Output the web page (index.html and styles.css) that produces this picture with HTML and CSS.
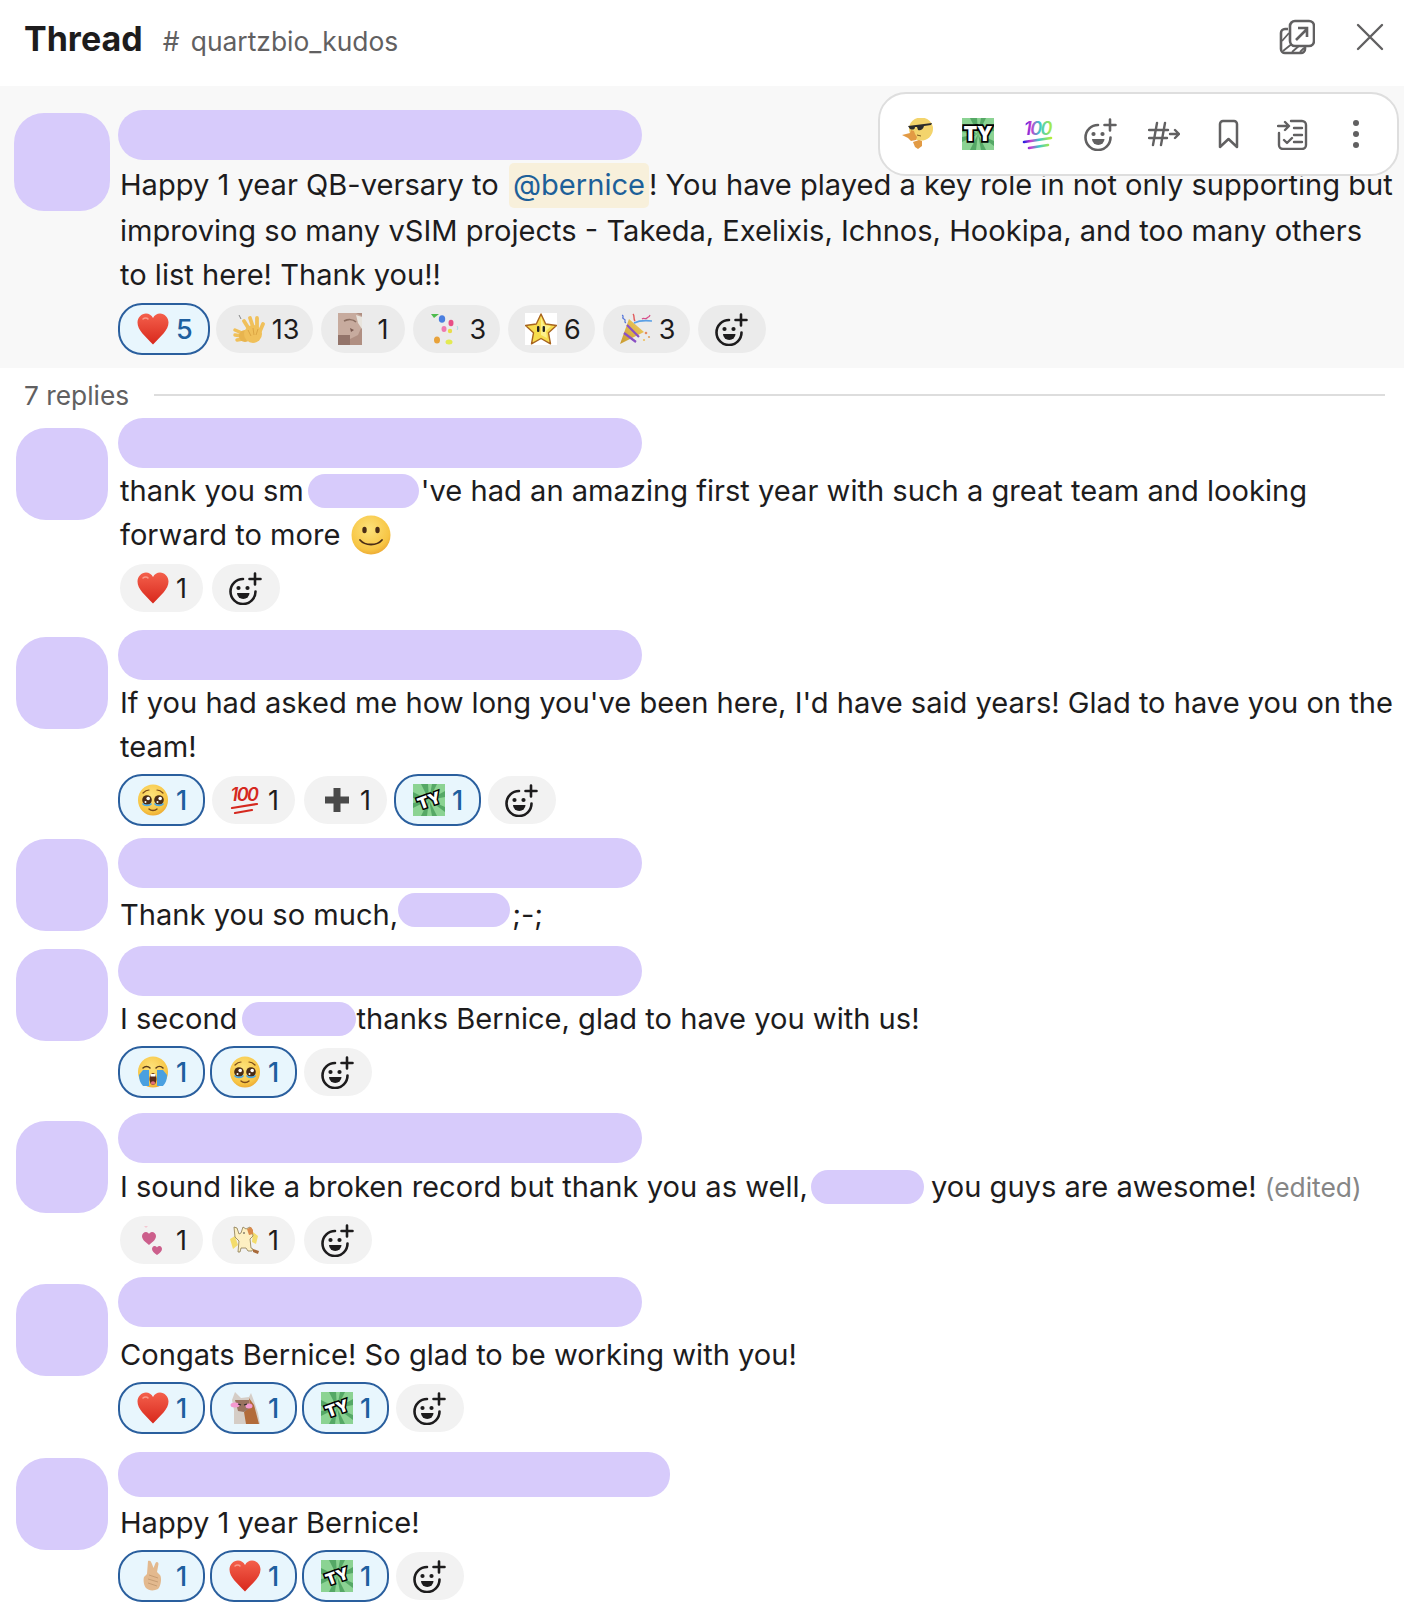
FILE: index.html
```html
<!DOCTYPE html>
<html lang="en">
<head>
    <meta charset="UTF-8">
    <title>Thread</title>
    <link rel="stylesheet" href="styles.css">
</head>
<body>
    <svg class="sprites" aria-hidden="true">
        <defs>
            <linearGradient id="heartFill" x1="0" y1="0" x2="0" y2="1">
                <stop offset="0" stop-color="#f4604c"/><stop offset="1" stop-color="#d8281c"/>
            </linearGradient>
            <radialGradient id="faceFill" cx="0.45" cy="0.35" r="0.75">
                <stop offset="0" stop-color="#fde27a"/><stop offset="0.7" stop-color="#f7c544"/><stop offset="1" stop-color="#e79a2a"/>
            </radialGradient>
            <linearGradient id="rainbow" x1="0" y1="0" x2="1" y2="0">
                <stop offset="0" stop-color="#2a1fe0"/><stop offset="0.25" stop-color="#c93bd0"/><stop offset="0.55" stop-color="#3bc9c9"/><stop offset="1" stop-color="#b4ee3a"/>
            </linearGradient>
            <linearGradient id="cone" x1="0" y1="1" x2="1" y2="0">
                <stop offset="0" stop-color="#c99a2e"/><stop offset="1" stop-color="#f2cf63"/>
            </linearGradient>
        </defs>
        <symbol id="i-add" viewBox="0 0 33 33">
            <path d="M14 7A12.5 12.5 0 1 0 26.5 19.5" fill="none" stroke="currentColor" stroke-width="2.6" stroke-linecap="round"/>
            <path d="M26 1.5v11M20.5 7h11" fill="none" stroke="currentColor" stroke-width="2.6" stroke-linecap="round"/>
            <circle cx="9.5" cy="16" r="2.1" fill="currentColor"/>
            <circle cx="18.5" cy="16" r="2.1" fill="currentColor"/>
            <path d="M8 21h12.500a6.250 6 0 0 1-12.500 0z" fill="currentColor"/>
        </symbol>
        <symbol id="i-heart" viewBox="0 0 32 32">
            <path d="M16 31.500C8 23 .5 17 .5 9.500 .5 4.500 4.500 .5 9 .5c3 0 5.500 1.500 7 4.500C17.500 2 20 .5 23 .5c4.500 0 8.500 4 8.500 9C31.500 17 24 23 16 31.500z" fill="url(#heartFill)"/>
            <path d="M6 6c1.500-1.500 4-1.500 5 0" fill="none" stroke="#fa9a8a" stroke-width="1.500" stroke-linecap="round"/>
        </symbol>
        <symbol id="i-clap" viewBox="0 0 32 32">
            <g fill="none" stroke="#f0c05a" stroke-linecap="round">
                <path d="M9 20L2 17M9 23L2 22M10 26l-6 1" stroke-width="3.400"/>
                <path d="M16 16L11 8M20 14L17 5M24 14l0-9M27 18l3-7" stroke-width="3.800"/>
            </g>
            <ellipse cx="12" cy="23" rx="6" ry="6" fill="#e8b44e"/>
            <ellipse cx="20" cy="21" rx="9" ry="9" fill="#f0c05a"/>
            <path d="M15 17l3 6M20 15l1 7M25 16l-2 6" fill="none" stroke="#d9a23f" stroke-width="0.900"/>
            <path d="M6 2l2 4" stroke="#6a6a6a" stroke-width="0.800"/>
        </symbol>
        <symbol id="i-catface" viewBox="0 0 32 32">
            <rect x="0" y="0" width="24" height="32" fill="#b08f82"/>
            <path d="M0 0h18l6 3v10l-4 9-8 4-4 6H0z" fill="#c7ab9e"/>
            <path d="M24 4l-6-2 2 8 4 6z" fill="#e8e4dd"/>
            <path d="M6 8c4-2 9-2 12 1" fill="none" stroke="#8a6d60" stroke-width="1.500"/>
            <path d="M0 22h12v10H0z" fill="#93746a"/>
            <path d="M12 15l4 2-3 2z" fill="#7a5a50"/>
        </symbol>
        <symbol id="i-balloons" viewBox="0 0 32 32">
            <path d="M1 1l8 0-5 4z" fill="#4dbb4d"/>
            <ellipse cx="12" cy="6" rx="3.200" ry="3.800" fill="#4a7fe0"/>
            <ellipse cx="21" cy="10" rx="2.500" ry="3.200" fill="#e84f86"/>
            <ellipse cx="14" cy="16" rx="2.500" ry="3" fill="#f07ab0"/>
            <ellipse cx="20" cy="18" rx="2.200" ry="2.200" fill="#e9dc4a"/>
            <ellipse cx="7" cy="27" rx="3" ry="3.500" fill="#e8a23a"/>
            <ellipse cx="19" cy="29" rx="3.500" ry="2.500" fill="#e3ea52"/>
            <path d="M27 13c1 1 1 3 0 4" fill="none" stroke="#a8dfe8" stroke-width="1"/>
        </symbol>
        <symbol id="i-star" viewBox="0 0 32 32">
            <rect width="32" height="32" fill="#fff"/>
            <path d="M16 1l4.700 10 10.800 1.500-8 7.300 2 11-9.500-5.300-9.500 5.300 2-11-8-7.300L11.300 11z" fill="#f7dc4d" stroke="#a8641e" stroke-width="1.400" stroke-linejoin="round"/>
            <path d="M16 4l3 8 7 1-5 5 1 7-6-3z" fill="#fdf08a"/>
            <rect x="12" y="13" width="2.400" height="6" rx="1.100" fill="#222"/>
            <rect x="17.600" y="13" width="2.400" height="6" rx="1.100" fill="#222"/>
        </symbol>
        <symbol id="i-popper" viewBox="0 0 32 32">
            <path d="M0 31L9 6l15 13z" fill="url(#cone)"/>
            <path d="M4 20l12 9M7 12l12 12" stroke="#8a4fc4" stroke-width="2.200" fill="none"/>
            <path d="M14 10c4-2 10-3 18-2" fill="none" stroke="#5aa0e6" stroke-width="1.600"/>
            <path d="M2 2c3 1-1 3 2 4s-1 3 2 4" fill="none" stroke="#4d6fd8" stroke-width="1.200"/>
            <path d="M13 1c2 2 0 4 2 7" fill="none" stroke="#e0585a" stroke-width="1.400"/>
            <path d="M22 6c2-2 3 1 5-1s2 0 3-3" fill="none" stroke="#d84f8a" stroke-width="1.200"/>
            <circle cx="26" cy="20" r="1.300" fill="#e88a60"/>
            <circle cx="29" cy="24" r="1.100" fill="#e0a060"/>
            <circle cx="24" cy="27" r="1.100" fill="#eec060"/>
        </symbol>
        <symbol id="i-ty-bg" viewBox="0 0 32 32">
            <rect width="32" height="32" fill="#8bd393"/>
            <path d="M16 16L8 0h7zM16 16L24 0h-5zM16 16l16-9v6zM16 16l16 7v5zM16 16l-8 16h6zM16 16l8 16h-5zM16 16L0 8v6zM16 16L0 24v-5z" fill="#55a866"/>
        </symbol>
        <symbol id="i-plus" viewBox="0 0 32 32">
            <path d="M12.500 4h7v8.500H28v7h-8.500V28h-7v-8.500H4v-7h8.500z" fill="#4a4a4a"/>
        </symbol>
        <symbol id="i-plead" viewBox="0 0 32 32">
            <ellipse cx="16" cy="16" rx="15" ry="15.500" fill="url(#faceFill)"/>
            <circle cx="10" cy="16" r="4.800" fill="#4a2c16"/>
            <circle cx="22" cy="16" r="4.800" fill="#4a2c16"/>
            <circle cx="11.200" cy="14.500" r="1.800" fill="#fff"/>
            <circle cx="23.200" cy="14.500" r="1.800" fill="#fff"/>
            <circle cx="8.500" cy="18" r="1" fill="#fff"/>
            <circle cx="20.500" cy="18" r="1" fill="#fff"/>
            <path d="M5.500 19.500c2 2.500 7 2.500 9 0M17.500 19.500c2 2.500 7 2.500 9 0" fill="none" stroke="#4aa8e8" stroke-width="1.600"/>
            <path d="M12 25c2 2 6 2 8 0" fill="none" stroke="#7a4a1a" stroke-width="1.400" stroke-linecap="round"/>
            <path d="M6 9c2-2 4-3 6-3M26 9c-2-2-4-3-6-3" fill="none" stroke="#7a4a1a" stroke-width="1.200" stroke-linecap="round"/>
        </symbol>
        <symbol id="i-sob" viewBox="0 0 32 32">
            <ellipse cx="16" cy="16" rx="15" ry="15.500" fill="url(#faceFill)"/>
            <path d="M6 14h6v16H6c-3-3-4-7-4-11zM20 14h6l4 5c0 4-1 8-4 11h-6z" fill="#4aa0e0"/>
            <path d="M6 12c2-2 5-2 7 0M19 12c2-2 5-2 7 0" fill="none" stroke="#5a3a1a" stroke-width="1.500" stroke-linecap="round"/>
            <ellipse cx="16" cy="23" rx="3.500" ry="6" fill="#5a2a1a"/>
            <rect x="13.500" y="18" width="5" height="2.500" fill="#fff"/>
            <ellipse cx="16" cy="27" rx="2.200" ry="1.800" fill="#e2707a"/>
        </symbol>
        <symbol id="i-hearts" viewBox="0 0 32 32">
            <path d="M7 2h4l-2 2z" fill="#f4c8d2"/>
            <path d="M12 21C7 17 5 15 5 12c0-2 2-4 4-4 1.500 0 2.500 1 3 2 .5-1 1.500-2 3-2 2 0 4 2 4 4 0 3-2 5-7 9z" fill="#cc5f8c"/>
            <path d="M20 31c-3-2-5-4-5-6 0-1.500 1-3 2.500-3 1 0 2 .5 2.500 1.500.5-1 1.500-1.500 2.500-1.500 1.500 0 2.500 1.500 2.500 3 0 2-2 4-5 6z" fill="#cc5f8c"/>
        </symbol>
        <symbol id="i-catdance" viewBox="0 0 32 32">
            <path d="M1 15l5-3 3 9-5 4zM24 8l5 4-2 8-4-2z" fill="#f3dc6c"/>
            <path d="M5 3l3 1 2 6 2-1 2-6 3 2 4-2 2 3 1 6-3 3 1 9 2 1-1 2h-4l-2-3h-5l-1 4H9l1-11-4-4z" fill="#fdf0c2" stroke="#8a7a50" stroke-width="0.800"/>
            <path d="M18 5l4-2 2 3 0 4-4 1z" fill="#d98a4a"/>
            <circle cx="15" cy="9" r="0.800" fill="#333"/>
            <path d="M24 25l6 2-1 3-5-2z" fill="#a86a3a"/>
        </symbol>
        <symbol id="i-dog" viewBox="0 0 32 32">
            <path d="M5 32V18L3 8l3-8 6 6 8-1 2-4 3 8 4 12 2 11z" fill="#d5cdc6"/>
            <path d="M20 6l5 7 5 19H17l-2-12 6-5z" fill="#b26b3a"/>
            <path d="M6 8h14l1 8-6 4-6-1z" fill="#9a7360"/>
            <ellipse cx="6" cy="13" rx="4.500" ry="2.500" fill="#f49ad0"/>
            <ellipse cx="20" cy="14" rx="3.500" ry="2.500" fill="#f49ad0"/>
            <path d="M9 12l3 1M15 13l3-1" stroke="#2a2a2a" stroke-width="1.200"/>
        </symbol>
        <symbol id="i-fingers" viewBox="0 0 32 32">
            <path d="M11 1c2-1 3 0 4 3l1.500 4 2-5c1-2 3-1 3 1l-1.500 8 3 3c2 3 1 11-2 14-4 2-9 2-12-1-2-2-3-8-2-11l3-3z" fill="#e3b98e"/>
            <path d="M12 15l9 3M11 19l10 3M11 23l9 3" fill="none" stroke="#c39a70" stroke-width="0.900"/>
        </symbol>
        <symbol id="i-shades" viewBox="0 0 32 32">
            <ellipse cx="19" cy="11" rx="12" ry="11.500" fill="#f3d46c"/>
            <path d="M6 8l24-3-1 2-7 1c-1 4-4 5-6 4l-1-3-2 0c0 3-3 3-5 2z" fill="#2b2b2b"/>
            <path d="M15 17l4 1" stroke="#7a5a20" stroke-width="1"/>
            <path d="M0 17l8-2 1-3 3 1 1 3 2 3-1 3-5 1-3-3zM11 24l6-2 3 1 0 5-4 3-3-2z" fill="#e29a44"/>
        </symbol>
        <symbol id="i-smile" viewBox="0 0 40 40">
            <circle cx="20" cy="20" r="19.500" fill="url(#faceFill)"/>
            <ellipse cx="13.500" cy="15" rx="2.200" ry="3.200" fill="#4a2c16"/>
            <ellipse cx="26.500" cy="15" rx="2.200" ry="3.200" fill="#4a2c16"/>
            <path d="M9 25c5 6 17 6 22 0" fill="none" stroke="#4a2c16" stroke-width="1.800" stroke-linecap="round"/>
        </symbol>
    </svg>

    <header class="top-bar">
        <div class="top-title">
            <h1>Thread</h1>
            <span class="channel"><span class="channel-hash">#</span> quartzbio_kudos</span>
        </div>
        <div class="top-actions">
            <svg class="icon-popout" viewBox="0 0 36 36" fill="none" stroke="#616061">
                <path d="M9 10H6a4 4 0 0 0-4 4v16a4 4 0 0 0 4 4h16a4 4 0 0 0 4-4v-3" stroke-width="2.600"/>
                <path d="M3 22l7-8M4 32l10-8M13 33l8-7M21 33l4-4" stroke-width="1.800"/>
                <rect x="11" y="2" width="24" height="25" rx="5" stroke-width="2.600" fill="#fff"/>
                <path d="M17 21l11-11M19 9h9v9" stroke-width="2.600"/>
            </svg>
            <svg class="icon-close" viewBox="0 0 28 28" fill="none" stroke="#616061" stroke-width="2.400" stroke-linecap="round">
                <path d="M2 2l24 24M26 2L2 26"/>
            </svg>
        </div>
    </header>

    <section class="parent-msg">
        <div class="toolbar">
            <span class="tool tool-w32"><svg class="emoji"><use href="#i-shades"/></svg></span>
            <span class="tool tool-w32"><svg class="emoji" viewBox="0 0 32 32"><use href="#i-ty-bg"/><text x="16" y="23" text-anchor="middle" class="ty-text">TY</text></svg></span>
            <span class="tool tool-w32"><svg class="emoji" viewBox="0 0 32 32"><text x="15.500" y="17" text-anchor="middle" class="hundred-text" fill="url(#rainbow)">100</text><path d="M2 24l27-4M7 30l19-3" fill="none" stroke="url(#rainbow)" stroke-width="2.600" stroke-linecap="round"/></svg></span>
            <span class="tool tool-w36"><svg class="add-icon add-gray"><use href="#i-add"/></svg></span>
            <span class="tool tool-w36">
                <svg class="icon-hash" viewBox="0 0 32 26" fill="none" stroke="#616061" stroke-width="2.400" stroke-linecap="round" stroke-linejoin="round">
                    <path d="M9 2L5 24M17 2l-4 22M1 9h19M1 17h18M22 13h9M27 9l4 4-4 4"/>
                </svg>
            </span>
            <span class="tool tool-w36">
                <svg class="icon-bookmark" viewBox="0 0 21 30" fill="none" stroke="#616061" stroke-width="2.500" stroke-linejoin="round">
                    <path d="M2 5a3 3 0 0 1 3-3h11a3 3 0 0 1 3 3v23l-8.500-8L2 28z"/>
                </svg>
            </span>
            <span class="tool tool-w36">
                <svg class="icon-later" viewBox="0 0 31 31" fill="none" stroke="#616061" stroke-width="2.400" stroke-linecap="round" stroke-linejoin="round">
                    <path d="M14 2h11a4 4 0 0 1 4 4v20a4 4 0 0 1-4 4H6a4 4 0 0 1-4-4V14"/>
                    <path d="M1 7h10M8 3l4 4-4 4M17 9h8M17 16h8M17 23h8M7 21l3 3 5-5"/>
                </svg>
            </span>
            <span class="tool tool-w36">
                <svg class="icon-dots" viewBox="0 0 8 30" fill="#616061">
                    <circle cx="4" cy="4" r="3"/><circle cx="4" cy="15" r="3"/><circle cx="4" cy="26" r="3"/>
                </svg>
            </span>
        </div>
        <div class="msg msg-parent">
            <div class="avatar avatar-big"></div>
            <div class="msg-body">
                <div class="name-bar"></div>
                <p class="msg-text msg-text-parent">Happy 1 year QB-versary to <span class="mention">@bernice</span>! You have played a key role in not only supporting but improving so many vSIM projects - Takeda, Exelixis, Ichnos, Hookipa, and too many others<br>to list here! Thank you!!</p>
                <div class="reactions on-gray">
                    <span class="pill mine"><svg class="emoji"><use href="#i-heart"/></svg><b>5</b></span>
                    <span class="pill"><svg class="emoji"><use href="#i-clap"/></svg><b>13</b></span>
                    <span class="pill"><svg class="emoji"><use href="#i-catface"/></svg><b>1</b></span>
                    <span class="pill"><svg class="emoji"><use href="#i-balloons"/></svg><b>3</b></span>
                    <span class="pill"><svg class="emoji"><use href="#i-star"/></svg><b>6</b></span>
                    <span class="pill"><svg class="emoji"><use href="#i-popper"/></svg><b>3</b></span>
                    <span class="pill pill-add"><svg class="add-icon"><use href="#i-add"/></svg></span>
                </div>
            </div>
        </div>
    </section>

    <div class="reply-count">
        <span>7 replies</span>
        <hr>
    </div>

    <section class="msg gap-0">
        <div class="avatar av-10"></div>
        <div class="msg-body">
            <div class="name-bar"></div>
            <p class="msg-text">thank you sm<span class="redact r-2"></span>'ve had an amazing first year with such a great team and looking forward to more <svg class="inline-smile"><use href="#i-smile"/></svg></p>
            <div class="reactions">
                <span class="pill"><svg class="emoji"><use href="#i-heart"/></svg><b>1</b></span>
                <span class="pill pill-add"><svg class="add-icon"><use href="#i-add"/></svg></span>
            </div>
        </div>
    </section>

    <section class="msg gap-18">
        <div class="avatar av-7"></div>
        <div class="msg-body">
            <div class="name-bar"></div>
            <p class="msg-text">If you had asked me how long you've been here, I'd have said years! Glad to have you on the team!</p>
            <div class="reactions">
                <span class="pill mine"><svg class="emoji"><use href="#i-plead"/></svg><b>1</b></span>
                <span class="pill"><svg class="emoji" viewBox="0 0 32 32"><text x="15" y="17" text-anchor="middle" class="hundred-text" fill="#d5281e">100</text><path d="M3 24l25-4M6 29l17-3" fill="none" stroke="#d5281e" stroke-width="2.200" stroke-linecap="round"/></svg><b>1</b></span>
                <span class="pill"><svg class="emoji"><use href="#i-plus"/></svg><b>1</b></span>
                <span class="pill mine"><svg class="emoji" viewBox="0 0 32 32"><use href="#i-ty-bg"/><text x="16" y="22" text-anchor="middle" class="ty-text ty-tilt" transform="rotate(-20 16 16)">TY</text></svg><b>1</b></span>
                <span class="pill pill-add"><svg class="add-icon"><use href="#i-add"/></svg></span>
            </div>
        </div>
    </section>

    <section class="msg gap-14">
        <div class="avatar av-1"></div>
        <div class="msg-body">
            <div class="name-bar"></div>
            <p class="msg-text text-low-5">Thank you so much,<span class="redact r-4"></span>;-;</p>
        </div>
    </section>

    <section class="msg gap-9">
        <div class="avatar av-3"></div>
        <div class="msg-body">
            <div class="name-bar"></div>
            <p class="msg-text">I second <span class="redact r-5"></span>thanks Bernice, glad to have you with us!</p>
            <div class="reactions">
                <span class="pill mine"><svg class="emoji"><use href="#i-sob"/></svg><b>1</b></span>
                <span class="pill mine"><svg class="emoji"><use href="#i-plead"/></svg><b>1</b></span>
                <span class="pill pill-add"><svg class="add-icon"><use href="#i-add"/></svg></span>
            </div>
        </div>
    </section>

    <section class="msg gap-17">
        <div class="avatar av-8"></div>
        <div class="msg-body">
            <div class="name-bar"></div>
            <p class="msg-text text-low-1">I sound like a broken record but thank you as well,<span class="redact r-6"></span>you guys are awesome! <span class="edited">(edited)</span></p>
            <div class="reactions">
                <span class="pill"><svg class="emoji"><use href="#i-hearts"/></svg><b>1</b></span>
                <span class="pill"><svg class="emoji"><use href="#i-catdance"/></svg><b>1</b></span>
                <span class="pill pill-add"><svg class="add-icon"><use href="#i-add"/></svg></span>
            </div>
        </div>
    </section>

    <section class="msg gap-13">
        <div class="avatar av-7"></div>
        <div class="msg-body">
            <div class="name-bar"></div>
            <p class="msg-text text-low-6">Congats Bernice! So glad to be working with you!</p>
            <div class="reactions">
                <span class="pill mine"><svg class="emoji"><use href="#i-heart"/></svg><b>1</b></span>
                <span class="pill mine"><svg class="emoji"><use href="#i-dog"/></svg><b>1</b></span>
                <span class="pill mine"><svg class="emoji" viewBox="0 0 32 32"><use href="#i-ty-bg"/><text x="16" y="22" text-anchor="middle" class="ty-text ty-tilt" transform="rotate(-20 16 16)">TY</text></svg><b>1</b></span>
                <span class="pill pill-add"><svg class="add-icon"><use href="#i-add"/></svg></span>
            </div>
        </div>
    </section>

    <section class="msg gap-20">
        <div class="avatar av-6"></div>
        <div class="msg-body">
            <div class="name-bar name-bar-wide"></div>
            <p class="msg-text text-low-4">Happy 1 year Bernice!</p>
            <div class="reactions">
                <span class="pill mine"><svg class="emoji"><use href="#i-fingers"/></svg><b>1</b></span>
                <span class="pill mine"><svg class="emoji"><use href="#i-heart"/></svg><b>1</b></span>
                <span class="pill mine"><svg class="emoji" viewBox="0 0 32 32"><use href="#i-ty-bg"/><text x="16" y="22" text-anchor="middle" class="ty-text ty-tilt" transform="rotate(-20 16 16)">TY</text></svg><b>1</b></span>
                <span class="pill pill-add"><svg class="add-icon"><use href="#i-add"/></svg></span>
            </div>
        </div>
    </section>
</body>
</html>
```

FILE: styles.css
```css
body {
    margin: 0;
    padding-bottom: 20px;
    font-family: Inter, "Liberation Sans", sans-serif;
    color: #1d1c1d;
    background: #fff;
}
.sprites {
    position: absolute;
    width: 0;
    height: 0;
}
.ty-text {
    font: 900 20px Inter, sans-serif;
    fill: #fff;
    stroke: #000;
    stroke-width: 3.500px;
    paint-order: stroke;
}
.ty-text.ty-tilt {
    font-size: 16px;
    stroke-width: 3px;
}
.hundred-text {
    font: italic 600 18px Inter, sans-serif;
    letter-spacing: -1.500px;
}

/* header */
.top-bar {
    height: 86px;
    box-sizing: border-box;
    padding: 0 20px 0 24px;
    display: flex;
    justify-content: space-between;
    align-items: center;
}
.top-title {
    display: flex;
    align-items: baseline;
    gap: 20px;
    padding-bottom: 9px;
}
h1 {
    margin: 0;
    font-size: 34px;
    font-weight: 700;
}
.channel {
    font-size: 26.400px;
    color: #616061;
}
.channel-hash {
    margin-right: 4px;
}
.top-actions {
    display: flex;
    align-items: center;
    gap: 41px;
    padding-bottom: 12px;
}
.icon-popout {
    width: 36px;
    height: 36px;
}
.icon-close {
    width: 28px;
    height: 28px;
}

/* parent message */
.parent-msg {
    position: relative;
    height: 282px;
    background: #f8f8f8;
    padding-top: 24px;
    box-sizing: border-box;
}
.toolbar {
    position: absolute;
    top: 6px;
    right: 5px;
    width: 521px;
    height: 84px;
    box-sizing: border-box;
    padding-left: 22px;
    display: flex;
    align-items: center;
    gap: 28px;
    background: #fff;
    border: 2px solid #dedede;
    border-radius: 28px;
    z-index: 2;
}
.tool {
    display: flex;
    justify-content: center;
    align-items: center;
    height: 36px;
    flex: none;
}
.tool-w32 { width: 32px; }
.tool-w36 { width: 36px; }
.add-gray {
    color: #616061;
}
.icon-hash {
    width: 32px;
    height: 26px;
    flex: none;
}
.icon-bookmark {
    width: 21px;
    height: 30px;
    flex: none;
}
.icon-later {
    width: 31px;
    height: 31px;
    flex: none;
}
.icon-dots {
    width: 8px;
    height: 30px;
    flex: none;
}

/* messages */
.msg {
    display: flex;
    gap: 10px;
    padding-left: 16px;
}
.msg-parent {
    padding-left: 14px;
    gap: 8px;
}
.gap-0 { margin-top: 0; }
.gap-9 { margin-top: 9px; }
.gap-13 { margin-top: 13px; }
.gap-14 { margin-top: 14px; }
.gap-17 { margin-top: 17px; }
.gap-18 { margin-top: 18px; }
.gap-20 { margin-top: 20px; }
.avatar {
    flex: none;
    width: 92px;
    height: 92px;
    border-radius: 30px;
    background: #d7cbfb;
}
.avatar-big {
    width: 96px;
    height: 98px;
    margin-top: 3px;
}
.av-1 { margin-top: 1px; }
.av-3 { margin-top: 3px; }
.av-6 { margin-top: 6px; }
.av-7 { margin-top: 7px; }
.av-8 { margin-top: 8px; }
.av-10 { margin-top: 10px; }
.msg-body {
    flex: 1;
    min-width: 0;
}
.name-bar {
    width: 524px;
    height: 50px;
    border-radius: 25px;
    background: #d7cbfb;
}
.name-bar-wide {
    width: 552px;
    height: 45px;
    border-radius: 22px;
}
.msg-text {
    margin: 1px 0 0;
    padding: 0 2px;
    font-size: 29.100px;
    line-height: 44px;
}
.msg-text-parent {
    margin-top: 3px;
}
.text-low-1 {
    margin-top: 2px;
}
.text-low-4 {
    margin-top: 4px;
}
.text-low-5 {
    margin-top: 5px;
}
.text-low-5 .redact {
    vertical-align: -2px;
}
.text-low-6 {
    margin-top: 6px;
}
.mention {
    display: inline-block;
    height: 45px;
    margin: 0 0 1px 2px;
    padding: 0 4px;
    border-radius: 5px;
    background: #f8f0db;
    color: #1d6099;
}
.redact {
    display: inline-block;
    height: 34px;
    vertical-align: -7px;
    border-radius: 17px;
    background: #d7cbfb;
}
.r-2 {
    width: 111px;
    margin: 0 2px 0 4px;
}
.r-4 {
    width: 112px;
    margin: 0 2px 0 0;
}
.r-5 {
    width: 114px;
    margin: 0 1px 0 -4px;
}
.r-6 {
    width: 113px;
    margin: 0 7px 0 3px;
}
.edited {
    font-size: 26.400px;
    color: #868686;
}
.inline-smile {
    width: 40px;
    height: 40px;
    vertical-align: -10px;
    margin-left: 2px;
}

/* reply count */
.reply-count {
    height: 50px;
    box-sizing: border-box;
    padding: 4px 19px 0 24px;
    display: flex;
    align-items: center;
    gap: 25px;
    color: #616061;
    font-size: 26.300px;
}
.reply-count hr {
    flex: 1;
    margin: 0;
    border: 0;
    height: 2px;
    background: #dddddd;
}

/* reactions */
.reactions {
    display: flex;
    gap: 9px;
    margin: 7px 0 0 2px;
}
.reactions.on-gray {
    gap: 8px;
    margin-top: 8px;
}
.pill {
    flex: none;
    height: 48px;
    box-sizing: border-box;
    padding: 0 13px 0 17px;
    display: flex;
    align-items: center;
    gap: 7px;
    border-radius: 24px;
    background: #f2f2f2;
    font-size: 27px;
}
.on-gray .pill {
    background: #ebebeb;
    padding-right: 14px;
}
.pill b {
    font-weight: 400;
    min-width: 14px;
}
.on-gray .pill.mine,
.pill.mine {
    margin: -2px;
    height: 52px;
    padding: 0 13px 0 17px;
    border: 2px solid #2a5f9e;
    background: #e8f6fd;
    color: #1d5f9f;
}
.on-gray .pill.mine {
    padding-right: 15px;
}
.pill.mine b {
    font-weight: 500;
}
.pill-add,
.on-gray .pill-add {
    padding: 0 17px;
    width: 68px;
    color: #1d1c1d;
}
.emoji {
    width: 32px;
    height: 32px;
    flex: none;
}
.add-icon {
    width: 33px;
    height: 33px;
    flex: none;
}
```
